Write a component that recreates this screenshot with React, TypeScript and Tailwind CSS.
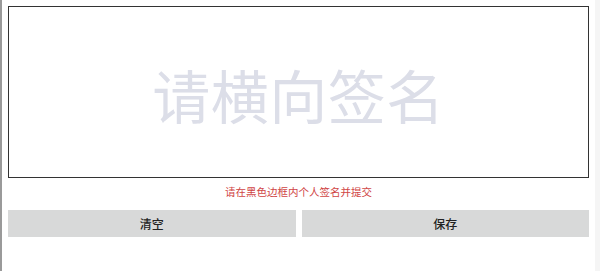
const App = () => {
  return (
    <div
      className="flex h-[271px] w-[600px] bg-white"
      style={{ fontFamily: '"Noto Sans CJK SC", "Noto Sans", sans-serif' }}
    >
      <div className="w-[2px] bg-[#9a9a9a]" />
      <div className="flex flex-1 flex-col px-[6px] pt-[6px]">
        {/* 签名区域 */}
        <div className="flex h-[172px] items-center justify-center border border-[#333333] pt-[4px]">
          <span className="text-[58px] leading-none tracking-[0.5px] text-[#dcdee8]">请横向签名</span>
        </div>

        <p className="mt-[7px] text-center text-[10.5px] leading-[14px] text-[#d04545]">
          请在黑色边框内个人签名并提交
        </p>

        <div className="mt-[11px] grid grid-cols-2 gap-[6px]">
          <button className="h-[27px] bg-[#d8d9d9] text-[12px] font-medium text-[#222222]">清空</button>
          <button className="h-[27px] bg-[#d8d9d9] text-[12px] font-medium text-[#222222]">保存</button>
        </div>
      </div>
      <div className="w-[5px] bg-[#f5f5f5]" />
    </div>
  );
};

export default App;
